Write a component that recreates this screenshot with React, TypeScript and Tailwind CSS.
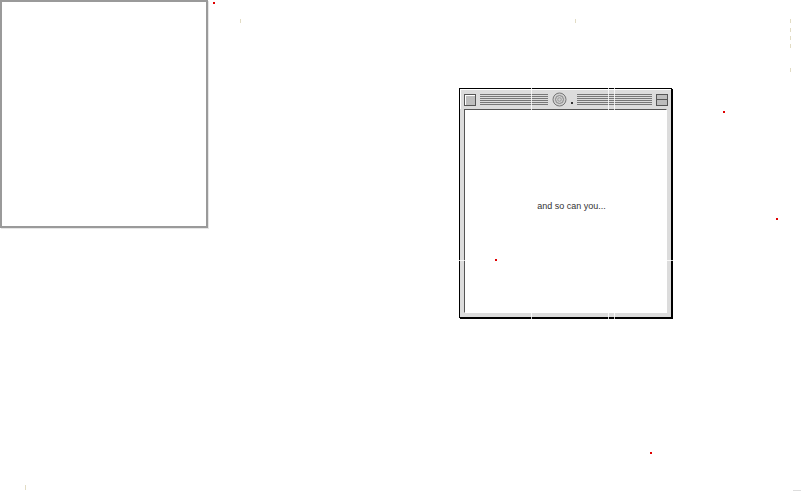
export default function App() {
  const dots = [
    { x: 213, y: 2 },
    { x: 723, y: 111 },
    { x: 776, y: 218 },
    { x: 495, y: 259 },
    { x: 650, y: 452 },
  ]
  const ticks = [
    { x: 240, y: 19, h: 4 },
    { x: 575, y: 19, h: 4 },
    { x: 790, y: 19, h: 4 },
    { x: 790, y: 28, h: 4 },
    { x: 790, y: 36, h: 4 },
    { x: 790, y: 44, h: 4 },
    { x: 790, y: 68, h: 4 },
    { x: 25, y: 485, h: 5 },
  ]

  return (
    <div className="relative w-[801px] h-[501px] bg-white overflow-hidden font-['Liberation_Sans',Arial,sans-serif]">
      {/* empty frame, top left */}
      <div className="w-[208px] h-[228px] border-2 border-[#9a9a9a] bg-white shadow-[1px_1px_0_#e6e6e6]" />

      {/* classic mac window */}
      <div className="absolute left-[459px] top-[88px] w-[213px] h-[230px] border border-black bg-[#dcdcdc] shadow-[1px_1px_0_#000] flex flex-col">
        <div className="h-[20px] flex items-center px-[3px] gap-[4px] border-t border-l border-white">
          <div className="w-[12px] h-[12px] border border-[#555] bg-[#bdbdbd] shadow-[inset_1px_1px_0_#fff]" />
          <div className="w-[68px] h-[11px] bg-[repeating-linear-gradient(to_bottom,#777_0px,#777_1px,transparent_1px,transparent_2px)]" />
          <svg width="15" height="15" viewBox="0 0 15 15" className="shrink-0">
            <circle cx="7.5" cy="7.5" r="6.5" fill="#cfcfcf" stroke="#777" strokeWidth="1" />
            <circle cx="7.5" cy="7.5" r="4" fill="none" stroke="#888" strokeWidth="1" />
            <circle cx="7.5" cy="7.5" r="1.8" fill="none" stroke="#999" strokeWidth="1" />
          </svg>
          <div className="w-[2px] h-[2px] bg-[#333] self-end mb-[5px]" />
          <div className="flex-1 h-[11px] bg-[repeating-linear-gradient(to_bottom,#777_0px,#777_1px,transparent_1px,transparent_2px)]" />
          <div className="w-[12px] h-[12px] border border-[#555] bg-[#bdbdbd] flex flex-col justify-center">
            <div className="h-px bg-[#555]" />
          </div>
        </div>
        <div className="flex-1 mx-[4px] mb-[4px] border-t border-l border-[#555] border-r border-b border-r-white border-b-white shadow-[inset_1px_1px_0_#000]">
          <div className="w-full h-full bg-white flex items-center justify-center">
            <span className="text-[9px] text-[#333] mt-[-8px] ml-[12px]">and so can you...</span>
          </div>
        </div>
      </div>

      {/* white seams crossing the window */}
      <div className="absolute left-[531px] top-[88px] w-px h-[232px] bg-white/80" />
      <div className="absolute left-[608px] top-[88px] w-px h-[232px] bg-white/80" />
      <div className="absolute left-[614px] top-[88px] w-px h-[232px] bg-white/80" />
      <div className="absolute left-[458px] top-[260px] w-[216px] h-px bg-white/80" />

      {dots.map((d, i) => (
        <div key={i} className="absolute w-[2px] h-[2px] bg-[#e00000]" style={{ left: d.x, top: d.y }} />
      ))}
      {ticks.map((t, i) => (
        <div key={i} className="absolute w-px bg-[#e2dcc4]" style={{ left: t.x, top: t.y, height: t.h }} />
      ))}
      <div className="absolute left-[793px] top-[490px] w-[8px] h-px bg-[#ddd]" />
    </div>
  )
}
